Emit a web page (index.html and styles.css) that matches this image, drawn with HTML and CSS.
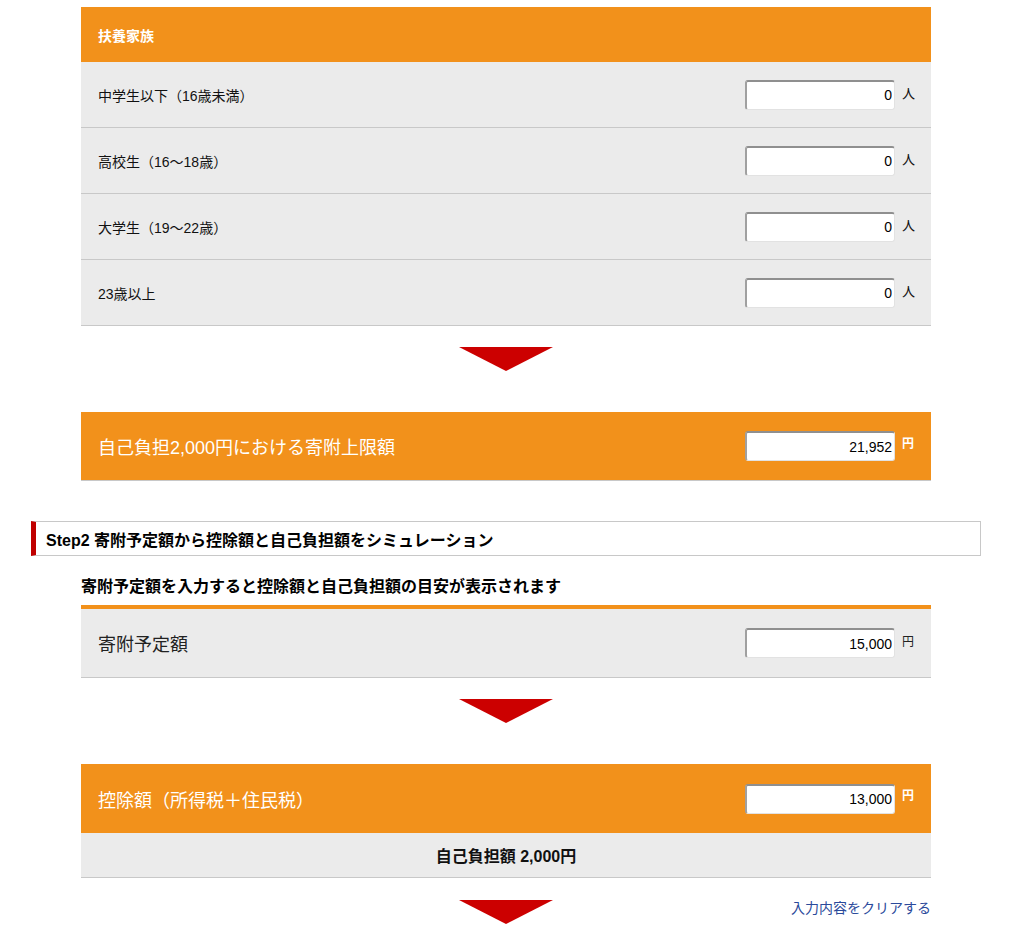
FILE: index.html
```html
<!DOCTYPE html>
<html lang="ja">
  <head>
    <meta charset="UTF-8" />
    <meta name="viewport" content="width=device-width, initial-scale=1.0" />
    <title>寄附金控除シミュレーション</title>
    <link rel="stylesheet" href="styles.css">
  </head>
  <body>
    <div class="page">
      <div class="calc">
        <div class="calc-head">扶養家族</div>
        <div class="row">
          <span class="row-label">中学生以下（16歳未満）</span>
          <span class="field"><input class="num" type="text" value="0" /><span class="unit">人</span></span>
        </div>
        <div class="row">
          <span class="row-label">高校生（16〜18歳）</span>
          <span class="field"><input class="num" type="text" value="0" /><span class="unit">人</span></span>
        </div>
        <div class="row">
          <span class="row-label">大学生（19〜22歳）</span>
          <span class="field"><input class="num" type="text" value="0" /><span class="unit">人</span></span>
        </div>
        <div class="row">
          <span class="row-label">23歳以上</span>
          <span class="field"><input class="num" type="text" value="0" /><span class="unit">人</span></span>
        </div>

        <div class="arrow-wrap"><div class="arrow"></div></div>

        <div class="row result">
          <span class="row-label">自己負担2,000円における寄附上限額</span>
          <span class="field"><input class="num" type="text" value="21,952" readonly /><span class="unit">円</span></span>
        </div>
      </div>

      <h2 class="step-title">Step2 寄附予定額から控除額と自己負担額をシミュレーション</h2>

      <div class="calc">
        <p class="lead">寄附予定額を入力すると控除額と自己負担額の目安が表示されます</p>
        <div class="row big">
          <span class="row-label">寄附予定額</span>
          <span class="field"><input class="num" type="text" value="15,000" /><span class="unit">円</span></span>
        </div>

        <div class="arrow-wrap"><div class="arrow"></div></div>

        <div class="row result no-line">
          <span class="row-label">控除額（所得税＋住民税）</span>
          <span class="field"><input class="num" type="text" value="13,000" readonly /><span class="unit">円</span></span>
        </div>
        <div class="burden">自己負担額 2,000円</div>

        <div class="arrow-wrap last">
          <span></span>
          <div class="arrow"></div>
          <a class="clear" href="#">入力内容をクリアする</a>
        </div>
      </div>
    </div>
  </body>
</html>
```

FILE: styles.css
```css
body {
  margin: 0;
  background: #fff;
  color: #111;
  font-family: "Liberation Sans", "Noto Sans CJK JP", sans-serif;
}
.page {
  width: 950px;
  margin-left: 31px;
  padding-top: 7px;
}
.calc {
  width: 850px;
  margin: 0 50px;
}
.calc-head {
  height: 55px;
  padding-left: 17px;
  display: flex;
  align-items: center;
  background: #f2911b;
  color: #fff;
  font-size: 14px;
  font-weight: bold;
}
.row {
  box-sizing: border-box;
  height: 66px;
  display: flex;
  align-items: center;
  justify-content: space-between;
  padding: 0 17px;
  background: #ebebeb;
  border-bottom: 1px solid #c8c8c8;
  font-size: 14px;
}
.field {
  display: flex;
  align-items: center;
}
.num {
  box-sizing: border-box;
  width: 150px;
  height: 30px;
  padding: 0 2px 0 4px;
  border-top: 2px solid #8f8f8f;
  border-left: 2px solid #a0a0a0;
  border-right: 1px solid #e2e2e2;
  border-bottom: 1px solid #e2e2e2;
  border-radius: 3px;
  background: #fff;
  text-align: right;
  font-family: "Liberation Sans", sans-serif;
  font-size: 14px;
  color: #000;
}
.unit {
  margin-left: 7px;
  margin-top: -4px;
  font-size: 13px;
  width: 12px;
}
.result {
  height: 69px;
  background: #f2911b;
  color: #fff;
  font-size: 18px;
}
.result .unit {
  font-size: 12px;
  font-weight: bold;
  margin-top: -8px;
}
.result.no-line {
  border-bottom: none;
  height: 69px;
}
.big {
  height: 73px;
  border-top: 4px solid #f2911b;
  font-size: 18px;
  color: #222;
}
.big .unit {
  font-size: 12px;
  margin-top: -6px;
}
.arrow-wrap {
  display: flex;
  justify-content: center;
  padding: 21px 0 41px;
}
.arrow {
  width: 0;
  height: 0;
  border-left: 47px solid transparent;
  border-right: 47px solid transparent;
  border-top: 24px solid #cc0000;
}
.arrow-wrap.last {
  display: grid;
  grid-template-columns: 1fr auto 1fr;
  padding: 22px 0 20px;
}
.clear {
  justify-self: end;
  margin-top: -3px;
  color: #2b4a9b;
  font-size: 14px;
  text-decoration: none;
}
.step-title {
  margin: 40px 0 0;
  height: 35px;
  box-sizing: border-box;
  display: flex;
  align-items: center;
  padding-left: 10px;
  border: 1px solid #c8c8c8;
  border-left: 5px solid #c00000;
  font-size: 16px;
  font-weight: bold;
  color: #000;
}
.lead {
  margin: 0;
  padding: 21px 0 8px;
  line-height: 20px;
  font-size: 16px;
  font-weight: bold;
  color: #000;
}
.burden {
  box-sizing: border-box;
  height: 45px;
  display: flex;
  align-items: center;
  justify-content: center;
  background: #ebebeb;
  border-bottom: 1px solid #c8c8c8;
  font-size: 16px;
  font-weight: bold;
}
```
